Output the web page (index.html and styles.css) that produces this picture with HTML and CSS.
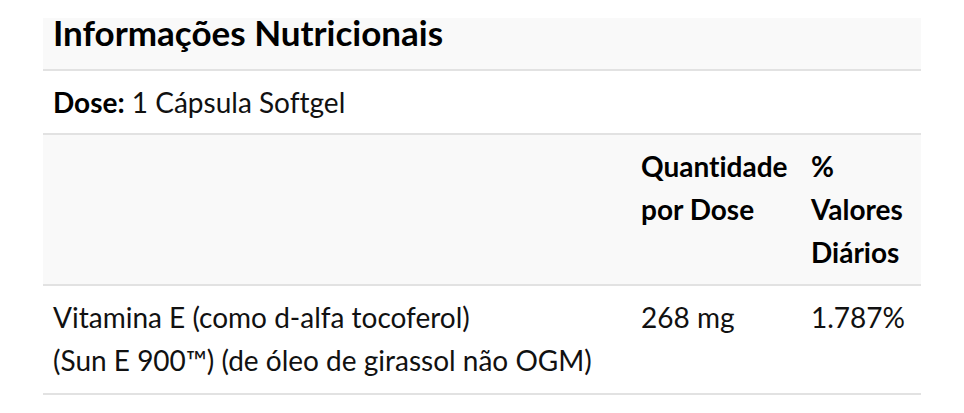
FILE: index.html
```html
<!DOCTYPE html>
<html lang="pt">
<head>
<meta charset="utf-8">
<title>Informações Nutricionais</title>
<link rel="stylesheet" href="styles.css">
</head>
<body>
<div class="panel">
  <div class="title-bar">
    <h2 class="title">Informações Nutricionais</h2>
  </div>
  <div class="dose"><strong>Dose:</strong> 1 Cápsula Softgel</div>
  <table class="facts">
    <colgroup>
      <col class="c-name">
      <col class="c-qty">
      <col class="c-dv">
    </colgroup>
    <thead>
      <tr>
        <th></th>
        <th>Quantidade por Dose</th>
        <th>% Valores Diários</th>
      </tr>
    </thead>
    <tbody>
      <tr>
        <td>Vitamina E (como d-alfa tocoferol)<br>(Sun E 900™) (de óleo de girassol não OGM)</td>
        <td>268 mg</td>
        <td>1.787%</td>
      </tr>
    </tbody>
  </table>
</div>
</body>
</html>
```

FILE: styles.css
```css
html, body {
  margin: 0;
  padding: 0;
  background: #ffffff;
}
body {
  font-family: Lato, "Open Sans", Arial, sans-serif;
  color: #111111;
  font-variant-ligatures: no-common-ligatures;
}
.panel {
  width: 878px;
  margin: 18px 0 0 43px;
}
.title-bar {
  background: #f9f9f9;
  border-bottom: 2px solid #e2e2e2;
  padding: 0 10px 23px;
}
.title {
  margin: 0;
  font-size: 35px;
  line-height: 28px;
  font-weight: 700;
  color: #000000;
}
.dose {
  font-size: 28px;
  line-height: 43px;
  padding: 10px 10px 9px;
  border-bottom: 2px solid #e2e2e2;
}
.dose strong {
  font-weight: 700;
  color: #000000;
}
.facts {
  width: 878px;
  border-collapse: collapse;
  table-layout: fixed;
  font-size: 28px;
  line-height: 43px;
}
.c-name { width: 588px; }
.c-qty { width: 170px; }
.c-dv { width: 120px; }
.facts th {
  background: #f9f9f9;
  text-align: left;
  vertical-align: top;
  font-weight: 700;
  color: #000000;
  padding: 10px 10px 10px;
  border-bottom: 2px solid #e2e2e2;
}
.facts td {
  text-align: left;
  vertical-align: top;
  padding: 10px 10px 11px;
  border-bottom: 2px solid #e2e2e2;
}
```
